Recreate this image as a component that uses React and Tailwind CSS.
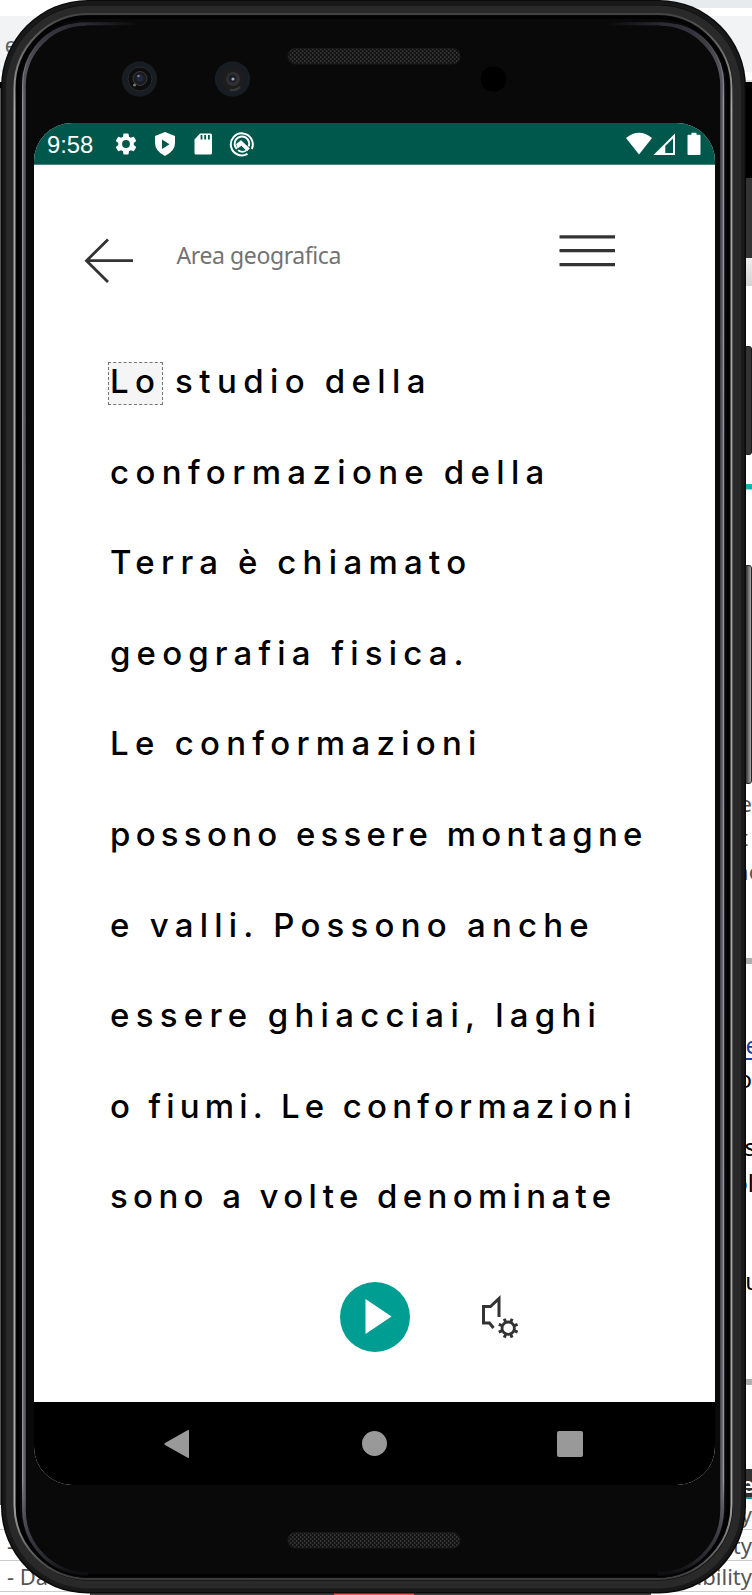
import React from "react";

const LINES = [
  { text: "conformazione della", cls: "tracking-[6.350px] [word-spacing:-1.500px]" },
  { text: "Terra è chiamato", cls: "tracking-[6.300px] [word-spacing:-1.500px]" },
  { text: "geografia fisica.", cls: "tracking-[6.150px]" },
  { text: "Le conformazioni", cls: "tracking-[6.270px] [word-spacing:-1px]" },
  { text: "possono essere montagne", cls: "tracking-[5.250px] [word-spacing:-.500px]" },
  { text: "e valli. Possono anche", cls: "tracking-[6.200px] [word-spacing:-.800px]" },
  { text: "essere ghiacciai, laghi", cls: "tracking-[6.270px] [word-spacing:-.800px]" },
  { text: "o fiumi. Le conformazioni", cls: "tracking-[5.180px] [word-spacing:-.600px]" },
  { text: "sono a volte denominate", cls: "tracking-[5.340px] [word-spacing:-.800px]" },
];

function Backdrop() {
  return (
    <div className="flex h-full w-full justify-between bg-white font-['Noto_Sans',sans-serif] text-[22px] leading-[30px] text-[#555]">
      <div className="flex w-[100px] flex-col">
        <div className="h-4" />
        <div className="h-14 bg-[#f1f3f4] pl-[5px] pt-[15px] font-['Liberation_Sans',sans-serif] leading-[30px] text-[#5f6368]">e</div>
        <div className="h-[10px]" />
        <div className="h-[6px] w-[20px] bg-black" />
        <div className="h-[1417px] w-[20px] bg-[#555]" />
        <div className="h-[25px] border-b border-[#ccc]" />
        <div className="h-[31px] border-b border-[#ccc] pl-[7px]">-</div>
        <div className="h-[31px] border-b border-[#ccc] pl-[7px]">- Da</div>
        <div className="flex-1" />
      </div>
      <div className="flex w-[100px] flex-col items-stretch overflow-hidden text-right">
        <div className="h-2 bg-[#e8ebee]" />
        <div className="h-2" />
        <div className="h-14 bg-[#f1f3f4]" />
        <div className="h-2" />
        <div className="h-[2px] bg-[#e0e0e0]" />
        <div className="h-24 bg-black" />
        <div className="h-20 bg-[#333]" />
        <div className="h-7 bg-linear-to-b from-[#eee] to-[#d4d4d4]" />
        <div className="h-[198px]" />
        <div className="h-[5px] bg-[#00b8ac]" />
        <div className="h-px bg-[#8edbd4]" />
        <div className="h-[298px]" />
        <div className="h-[34px]">e</div>
        <div className="h-[34px] pr-1">t</div>
        <div className="-mr-[10px] h-[34px]">no</div>
        <div className="h-[68px]" />
        <div className="h-[6px] bg-[#b0b0b0]" />
        <div className="h-[66px]" />
        <div className="-mr-[7px] h-[34px] text-[24px] text-[#1a3aa5] underline decoration-2 underline-offset-4">&nbsp;e</div>
        <div className="h-[68px] text-[24px] text-black">o</div>
        <div className="-mr-[4px] h-[36px] text-[24px] text-black">s</div>
        <div className="-mr-[2px] h-[98px] text-[24px] text-black">pl</div>
        <div className="-mr-2 h-[113px] text-[24px] text-black">u</div>
        <div className="h-[6px] bg-[#b0b0b0]" />
        <div className="h-[84px]" />
        <div className="-mr-0.5 h-7 bg-[#333] font-semibold text-white">e</div>
        <div className="h-[2px] bg-[#00a79d]" />
        <div className="h-[31px] border-b border-[#ccc]">y</div>
        <div className="h-[31px] border-b border-[#ccc]">ity</div>
        <div className="h-[31px] border-b border-[#ccc]">sibility</div>
        <div className="flex-1" />
      </div>
    </div>
  );
}

function Rings() {
  return (
    <svg className="absolute inset-0 h-full w-full" viewBox="0 0 752 1595" fill="none" aria-hidden="true">
      <defs>
        <linearGradient id="inner" x1="0" y1="22" x2="0" y2="1575" gradientUnits="userSpaceOnUse">
          <stop offset="0" stopColor="#2b2a33" />
          <stop offset=".03" stopColor="#55545e" />
          <stop offset=".95" stopColor="#5f5e68" />
          <stop offset=".99" stopColor="#26262d" />
          <stop offset="1" stopColor="#0c0c0e" />
        </linearGradient>
        <linearGradient id="edge" x1="0" y1="22" x2="0" y2="1575" gradientUnits="userSpaceOnUse">
          <stop offset="0" stopColor="#2b2a33" />
          <stop offset=".05" stopColor="#98979d" />
          <stop offset=".94" stopColor="#98979d" />
          <stop offset=".98" stopColor="#333" stopOpacity="0" />
        </linearGradient>
        <linearGradient id="shine" x1="0" y1="14" x2="0" y2="1580" gradientUnits="userSpaceOnUse">
          <stop offset="0" stopColor="#444" />
          <stop offset=".06" stopColor="#a8a8a8" />
          <stop offset=".95" stopColor="#a8a8a8" />
          <stop offset="1" stopColor="#3a3a3a" />
        </linearGradient>
        <linearGradient id="fadeL" x1="86" y1="0" x2="140" y2="0" gradientUnits="userSpaceOnUse">
          <stop stopColor="#2b2a33" /><stop offset="1" stopColor="#090909" />
        </linearGradient>
        <linearGradient id="fadeR" x1="660" y1="0" x2="606" y2="0" gradientUnits="userSpaceOnUse">
          <stop stopColor="#2b2a33" /><stop offset="1" stopColor="#090909" />
        </linearGradient>
        <pattern id="mesh" width="4" height="4" patternUnits="userSpaceOnUse">
          <rect width="4" height="4" fill="#131313" />
          <rect width="1.4" height="2" fill="#343434" />
          <rect x="2" y="2" width="1.4" height="2" fill="#343434" />
        </pattern>
      </defs>
      <rect x="1" y="0" width="745" height="1593.5" rx="87" fill="#0a0a0a" />
      <rect x="4.5" y="3" width="738" height="1587" rx="84" stroke="#191919" strokeWidth="4" />
      <rect x="10" y="9.5" width="727" height="1575" rx="79" stroke="#292929" strokeWidth="8" />
      <rect x="14.5" y="14" width="717" height="1565" rx="74" fill="#060606" stroke="url(#shine)" strokeWidth="2" />
      <rect x="19" y="16" width="708" height="1562" rx="70" fill="#090909" />
      <rect x="18" y="17.5" width="710" height="1558" rx="71" stroke="#020202" strokeWidth="3" />
      <path d="M86 24A62 62 0 0 0 24 86V1510A64 64 0 0 0 88 1574" stroke="url(#inner)" strokeWidth="3.5" />
      <path d="M660 24A62 62 0 0 1 722 86V1510A64 64 0 0 1 658 1574" stroke="url(#inner)" strokeWidth="3.5" />
      <path d="M70 24.500A61 61 0 0 0 22.700 86V1510A64 64 0 0 0 50 1561" stroke="url(#edge)" strokeWidth="1.2" />
      <path d="M676 24.500A61 61 0 0 1 723.500 86V1510A64 64 0 0 1 696 1561" stroke="url(#edge)" strokeWidth="1.400" />
      <rect x="86" y="22.300" width="54" height="3" fill="url(#fadeL)" />
      <rect x="606" y="22.300" width="54" height="3" fill="url(#fadeR)" />
      {[48, 1532].map((y) => (
        <rect key={y} x="288" y={y + 0.5} width="172" height="15.500" rx="7" fill="url(#mesh)" stroke="#191919" />
      ))}
      <circle cx="139.500" cy="79" r="17.7" fill="#171d22" />
      <circle cx="140" cy="79" r="12" fill="#0d0d0e" stroke="#2b2b2b" />
      <circle cx="140" cy="78.500" r="7" fill="#1b1c1f" stroke="#3a3a3c" />
      <circle cx="140" cy="78" r="3.500" fill="#222840" />
      <circle cx="134.500" cy="85" r="1.500" fill="#777" />
      <circle cx="138.500" cy="76" r="1.200" fill="#7a8398" />
      <circle cx="232.500" cy="79" r="17.7" fill="#171d22" />
      <circle cx="232.500" cy="79.500" r="11.5" fill="#1d1d1e" />
      <path d="M240 87A11 11 0 0 1 230 90" stroke="#39393b" strokeWidth="2" />
      <circle cx="233" cy="79" r="7" fill="#303033" />
      <circle cx="232.500" cy="78.500" r="4" fill="#1c1e27" />
      <circle cx="233" cy="79" r="1.600" fill="#a3a7b5" />
      <circle cx="493.500" cy="79" r="12.800" fill="#000" />
    </svg>
  );
}

function StatusBar() {
  return (
    <div className="flex h-[42px] shrink-0 items-center border-b border-[#4b867d] bg-[#00574b] pl-[13px] pr-[14px] text-white">
      <span className="w-[67px] pt-[2px] font-['Liberation_Sans',sans-serif] text-[23.800px] leading-none">9:58</span>
      <svg className="-ml-px h-[26px] w-[26px]" viewBox="0 0 24 24" fill="currentColor">
        <path d="M19.14 12.94c.04-.3.06-.61.06-.94 0-.32-.02-.64-.07-.94l2.03-1.58a.49.49 0 0 0 .12-.61l-1.92-3.32a.488.488 0 0 0-.59-.22l-2.390.96c-.5-.38-1.030-.7-1.620-.94l-.36-2.540a.484.484 0 0 0-.48-.41h-3.840c-.24 0-.43.17-.47.41l-.36 2.540c-.59.24-1.130.57-1.620.94l-2.390-.96c-.22-.08-.47 0-.59.22L2.740 8.870c-.12.21-.08.47.12.61l2.030 1.580c-.05.3-.09.63-.09.94s.02.64.07.94l-2.030 1.580a.49.49 0 0 0-.12.61l1.920 3.320c.12.22.37.29.59.22l2.390-.96c.5.38 1.030.7 1.620.94l.36 2.540c.05.24.24.41.48.41h3.840c.24 0 .44-.17.47-.41l.36-2.540c.59-.24 1.130-.56 1.620-.94l2.390.96c.22.08.47 0 .59-.22l1.920-3.320c.12-.22.07-.47-.12-.61l-2.010-1.580zM12 15.600A3.600 3.600 0 1 1 12 8.400a3.600 3.600 0 0 1 0 7.200z" />
      </svg>
      <svg className="ml-[13px] h-[26px] w-[26px]" viewBox="0 0 26 26">
        <path d="M13 1 23 5V12Q23 20 13 25 3 20 3 12V5Z" fill="currentColor" />
        <path d="M10 8.500V18L17.500 13.200Z" fill="#00574b" />
      </svg>
      <svg className="ml-[12px] h-[26px] w-[26px]" viewBox="0 0 26 26">
        <path d="M10 2.500H20.500Q22 2.500 22 4V22Q22 23.500 20.500 23.500H6Q4.500 23.500 4.500 22V8.500Z" fill="currentColor" />
        <path d="M11.500 4v4.500M15.200 4v4.500M18.900 4v4.500" stroke="#00574b" strokeWidth="1.800" />
      </svg>
      <svg className="ml-[13px] h-[26px] w-[26px]" viewBox="0 0 26 26" fill="none" stroke="currentColor">
        <path d="M18.500 22.800A11 11 0 1 1 22.800 18" strokeWidth="2" />
        <path d="M7.800 18A7.300 7.300 0 1 1 19.700 15.500" strokeWidth="2" />
        <path d="M7.500 13 12 9.500 20.500 17.500 18 20 12.500 14.500 8.500 17Z" fill="currentColor" strokeWidth=".6" />
        <path d="M9 19.300Q13 22 17 19.800" strokeWidth="1.800" />
      </svg>
      <div className="ml-auto flex items-center">
        <svg className="h-[26px] w-[26px]" viewBox="0 0 26 26"><path d="M0 7Q13-3.500 26 7L13 23.500Z" fill="currentColor" /></svg>
        <svg className="ml-px h-[26px] w-[22px]" viewBox="0 0 22 26">
          <path d="M.5 24 22 2.500V24Z" fill="currentColor" />
          <path d="M12.300 15 20 7.500V22H12.300Z" fill="#00574b" />
        </svg>
        <svg className="ml-[12px] h-[26px] w-[14px]" viewBox="0 0 14 26"><path d="M4.500 1.800H9.500V3.800H12.500Q13.500 3.800 13.500 4.800V23Q13.500 24 12.500 24H1.500Q.5 24 .5 23V4.800Q.5 3.800 1.500 3.800H4.500Z" fill="currentColor" /></svg>
      </div>
    </div>
  );
}

function Header() {
  return (
    <div className="flex h-[171px] shrink-0 items-start pl-[50px]">
      <svg className="mt-[73px] h-[46px] w-[50px]" viewBox="0 0 50 46" fill="none" stroke="#333" strokeWidth="2.800">
        <path d="M24 1.500 2.500 22.700 24 44M2.500 22.700H49" />
      </svg>
      <h1 className="ml-[42.500px] mt-[73px] whitespace-nowrap font-['Noto_Sans',sans-serif] text-[23px] leading-[34px] tracking-[-0.400px] text-[#737373]">Area geografica</h1>
      <svg className="ml-auto mr-[99px] mt-[69px] h-[34px] w-[57px]" viewBox="0 0 57 34" stroke="#333" strokeWidth="3.200">
        <path d="M.5 2.900H56M.5 16.700H56M.5 30.700H56" />
      </svg>
    </div>
  );
}

function Controls() {
  return (
    <div className="flex h-[70px] shrink-0 items-center pl-[306px]">
      <button className="flex h-[70px] w-[70px] items-center justify-center rounded-full bg-[#009e92]" aria-label="Play">
        <svg className="ml-[7px] h-[36px] w-[27px]" viewBox="0 0 27 36"><path d="M.5 0 26.500 17.500.5 35Z" fill="#fff" /></svg>
      </button>
      <svg className="ml-[71px] h-[44px] w-[39px]" viewBox="0 0 39 44" fill="none" stroke="#333" strokeWidth="3">
        <path d="M12.500 33 8.500 28H2.500V11.500H9.500L18 3.500V22" />
        <circle cx="27.200" cy="33.200" r="6.200" strokeWidth="2.800" />
        <path d="M33.200 35.700 36.600 37.100M29.700 39.200 31.100 42.600M24.700 39.200 23.300 42.600M21.200 35.700 17.800 37.100M21.200 30.700 17.800 29.300M24.700 27.200 23.300 23.800M29.700 27.200 31.100 23.800M33.200 30.700 36.600 29.300" strokeWidth="3" />
      </svg>
    </div>
  );
}

function NavBar() {
  return (
    <div className="flex h-[83px] shrink-0 items-center bg-black">
      <svg className="ml-[130px] h-[30px] w-[26px]" viewBox="0 0 26 30" fill="#999"><path d="M24 1Q25 .7 25 2V28Q25 29.300 23.700 28.700L1 16Q-.3 15 1 14Z" /></svg>
      <div className="ml-[172px] h-[25px] w-[25px] rounded-full bg-[#999]" />
      <div className="ml-[170px] h-[26px] w-[26px] rounded-[2px] bg-[#999]" />
    </div>
  );
}

export default function App() {
  return (
    <div className="relative h-[1595px] w-[752px] overflow-hidden bg-white">
      <Backdrop />
      <div className="absolute bottom-0 left-[90px] flex h-[2px] w-[561px] bg-[#444]"><div className="ml-[244px] w-[80px] bg-[#ff5050]" /></div>
      <div className="absolute left-[744px] top-[346px] h-[109px] w-[8px] rounded-[3px] border border-[#1b1b1b] bg-[#333]" />
      <div className="absolute left-[744px] top-[565px] h-[219px] w-[8px] rounded-[3px] border border-[#222] bg-linear-to-r from-[#222] to-[#aaa]" />
      <div className="absolute inset-0">
        <Rings />
        <main className="relative ml-[34px] mt-[123px] flex h-[1362px] w-[681px] flex-col overflow-hidden rounded-[38px] bg-white">
          <StatusBar />
          <Header />
          <div className="h-[946px] shrink-0 whitespace-nowrap pl-[76px] font-['Inter',sans-serif] text-[33px] font-medium leading-[90.600px] text-black">
            <p className="tracking-[6.400px] [word-spacing:-1.500px]">
              <span className="relative isolate">
                Lo
                <span className="absolute -left-[2px] -right-[2px] bottom-[-4px] -z-10 h-[43px] border border-dashed border-[#777] bg-[#f5f5f5]" />
              </span>{" "}
              studio della
            </p>
            {LINES.map((line) => (
              <p key={line.text} className={line.cls}>{line.text}</p>
            ))}
          </div>
          <Controls />
          <div className="flex-1" />
          <NavBar />
        </main>
      </div>
    </div>
  );
}
